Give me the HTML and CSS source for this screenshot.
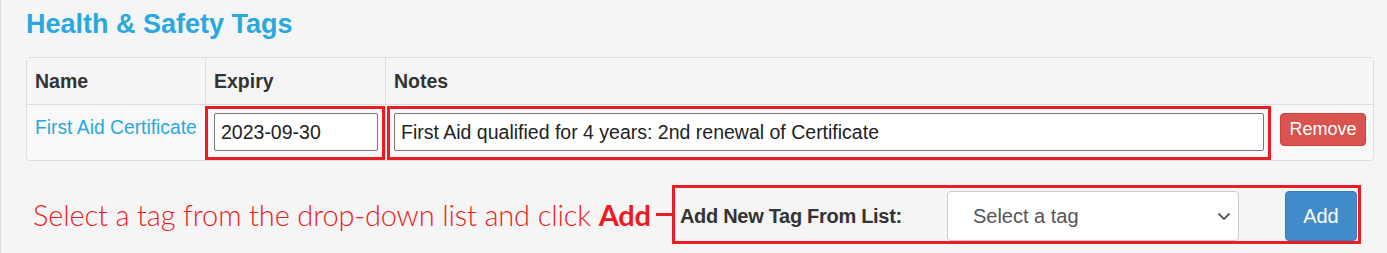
FILE: index.html
```html
<!DOCTYPE html>
<html lang="en">
<head>
<meta charset="utf-8">
<title>Health &amp; Safety Tags</title>
<link rel="stylesheet" href="styles.css">
</head>
<body>
<div class="page">
  <h2 class="title">Health &amp; Safety Tags</h2>
  <table class="tags">
    <colgroup>
      <col class="c-name"><col class="c-exp"><col class="c-notes"><col class="c-act">
    </colgroup>
    <thead>
      <tr>
        <th>Name</th>
        <th class="sep">Expiry</th>
        <th class="sep">Notes</th>
        <th></th>
      </tr>
    </thead>
    <tbody>
      <tr>
        <td class="name"><a href="#">First Aid Certificate</a></td>
        <td class="sep hlcell"><div class="hl hl-exp"><input class="field f-exp" type="text" value="2023-09-30"></div></td>
        <td class="sep hlcell"><div class="hl hl-notes"><input class="field f-notes" type="text" value="First Aid qualified for 4 years: 2nd renewal of Certificate"></div></td>
        <td class="act"><button class="btn-remove" type="button">Remove</button></td>
      </tr>
    </tbody>
  </table>
  <div class="addrow">
    <span class="note">Select a tag from the drop-down list and click <b>Add</b></span>
    <span class="connector"></span>
    <div class="addbox">
      <label class="addlabel">Add New Tag From List:</label>
      <div class="selwrap">
        <select class="tagsel"><option>Select a tag</option></select>
        <svg class="chev" width="14" height="9" viewBox="0 0 14 9"><path d="M1.5 1.5 L7 7 L12.5 1.5" fill="none" stroke="#555" stroke-width="1.8"/></svg>
      </div>
      <button class="btn-add" type="button">Add</button>
    </div>
  </div>
</div>
</body>
</html>
```
FILE: styles.css
```css
html, body {
  margin: 0;
  padding: 0;
  background: #f5f5f5;
}
.page {
  box-sizing: border-box;
  height: 253px;
  border-left: 1px solid #dddddd;
  padding-left: 25px;
  font-family: "Liberation Sans", Arial, sans-serif;
  color: #333333;
}
.title {
  margin: 0 0 18px 0;
  padding-top: 9px;
  font-size: 27px;
  line-height: 30px;
  font-weight: 700;
  color: #29a8e0;
}
.tags {
  width: 1348px;
  table-layout: fixed;
  border-collapse: separate;
  border-spacing: 0;
  border: 1px solid #dddddd;
  border-radius: 4px;
}
.c-name { width: 178px; }
.c-exp { width: 180px; }
.c-notes { width: 886px; }
.c-act { width: 102px; }
.tags th {
  text-align: left;
  font-size: 19.5px;
  font-weight: 700;
  line-height: 20px;
  padding: 13px 8px;
  border-bottom: 1px solid #dddddd;
  background: #f5f5f5;
}
.tags th.sep, .tags td.sep {
  border-left: 1px solid #dddddd;
}
.tags td {
  background: #f9f9f9;
  vertical-align: top;
  height: 55px;
  box-sizing: border-box;
  padding: 0;
}
.tags tbody tr td:first-child { border-bottom-left-radius: 4px; }
.tags tbody tr td:last-child { border-bottom-right-radius: 4px; }
.tags td.name {
  padding: 13px 8px 0 8px;
  font-size: 19.3px;
  line-height: 20px;
  white-space: nowrap;
}
.name a {
  color: #29a8e0;
  text-decoration: none;
}
.tags td.hlcell {
  padding-top: 1px;
}
.hl {
  box-sizing: border-box;
  height: 54px;
  border: 3px solid #ed1c24;
  margin-bottom: -1px;
  padding-top: 4px;
}
.hl-exp {
  width: 180px;
  margin-left: -1px;
  padding-left: 6px;
}
.hl-notes {
  width: 884px;
  margin-left: 1px;
  padding-left: 4px;
}
.field {
  box-sizing: border-box;
  height: 38px;
  border: 1px solid #767676;
  border-radius: 2px;
  background: #ffffff;
  padding: 0 6px;
  margin: 0;
  font-family: "Liberation Sans", Arial, sans-serif;
  font-size: 19.5px;
  color: #222222;
  display: block;
}
.f-exp { width: 164px; }
.f-notes { width: 870px; }
.tags td.act {
  padding: 8px 0 0 9px;
}
.btn-remove {
  box-sizing: border-box;
  width: 86px;
  height: 33px;
  padding: 0;
  border: 1px solid #d43f3a;
  border-radius: 4px;
  background: #d9534f;
  color: #ffffff;
  font-family: "Liberation Sans", Arial, sans-serif;
  font-size: 18px;
}
.addrow {
  display: flex;
  align-items: center;
  margin-top: 24px;
}
.note {
  margin-left: 7px;
  font-family: Lato, "Open Sans", sans-serif;
  font-size: 29px;
  font-weight: 300;
  letter-spacing: -0.15px;
  color: #ed1c24;
  white-space: nowrap;
}
.note b {
  font-weight: 700;
}
.connector {
  width: 16px;
  height: 3px;
  margin-left: 5px;
  background: #ed1c24;
}
.addbox {
  box-sizing: border-box;
  width: 689px;
  height: 59px;
  border: 3px solid #ed1c24;
  display: flex;
  align-items: flex-start;
  padding: 3px 0 0 5px;
}
.addlabel {
  flex: 0 0 267px;
  align-self: center;
  font-size: 20px;
  font-weight: 700;
  letter-spacing: -0.3px;
  color: #333333;
  white-space: nowrap;
}
.selwrap {
  position: relative;
  width: 292px;
  height: 50px;
}
.tagsel {
  -webkit-appearance: none;
  appearance: none;
  box-sizing: border-box;
  width: 292px;
  height: 50px;
  border: 1px solid #cccccc;
  border-radius: 4px;
  background: #ffffff;
  padding: 0 0 0 25px;
  margin: 0;
  font-family: "Liberation Sans", Arial, sans-serif;
  font-size: 20px;
  color: #555555;
}
.chev {
  position: absolute;
  right: 8px;
  top: 21px;
  pointer-events: none;
}
.btn-add {
  box-sizing: border-box;
  width: 72px;
  height: 50px;
  margin-left: 46px;
  padding: 0;
  border: 1px solid #357ebd;
  border-radius: 4px;
  background: #428bca;
  color: #ffffff;
  font-family: "Liberation Sans", Arial, sans-serif;
  font-size: 20px;
}
```
